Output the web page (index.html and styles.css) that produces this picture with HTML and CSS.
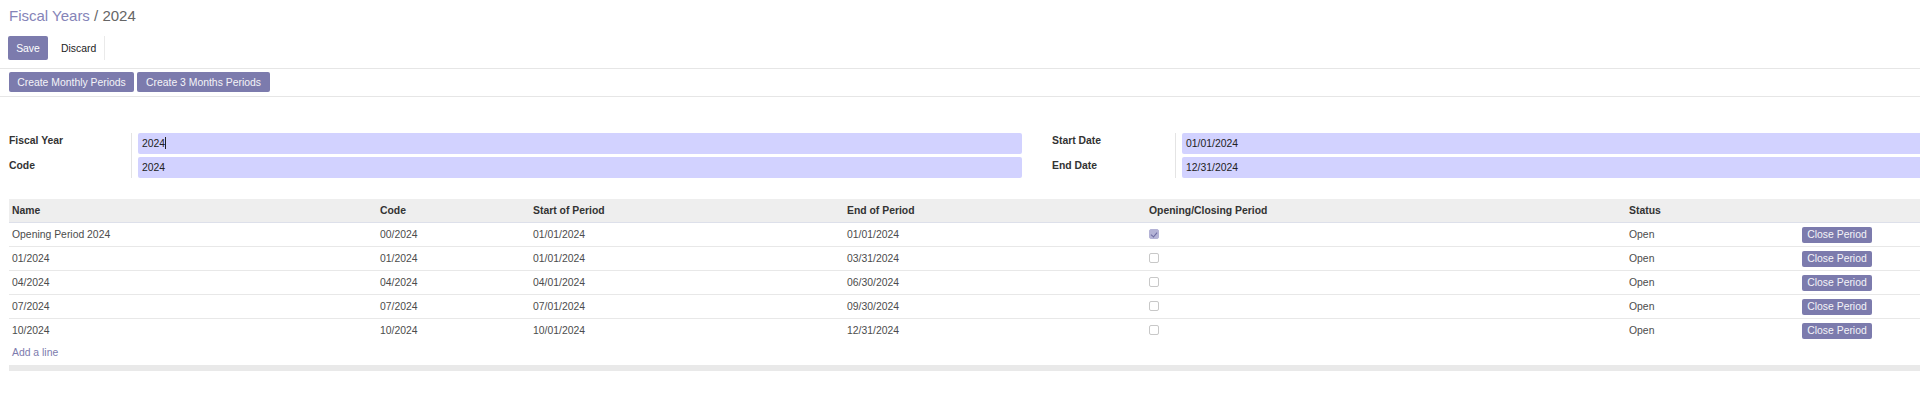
FILE: index.html
```html
<!DOCTYPE html>
<html lang="en">

<head>
  <meta charset="UTF-8" />
  <meta name="viewport" content="width=device-width, initial-scale=1.0" />
  <title>Fiscal Years / 2024</title>
  <link rel="stylesheet" href="styles.css">
</head>

<body>

  <div class="breadcrumb"><span class="crumb">Fiscal Years</span> / 2024</div>

  <div class="toolbar">
    <button class="btn-primary">Save</button>
    <button class="btn-discard">Discard</button>
  </div>

  <div class="header-buttons">
    <button class="btn-small">Create Monthly Periods</button>
    <button class="btn-small">Create 3 Months Periods</button>
  </div>

  <div class="sheet">
    <!-- main fields -->
    <div class="groups">
      <div class="group group-left">
        <div class="labels">
          <label>Fiscal Year</label>
          <label>Code</label>
        </div>
        <div class="fields">
          <div class="field">2024<span class="caret"></span></div>
          <div class="field">2024</div>
        </div>
      </div>
      <div class="group group-right">
        <div class="labels">
          <label>Start Date</label>
          <label>End Date</label>
        </div>
        <div class="fields">
          <div class="field">01/01/2024</div>
          <div class="field">12/31/2024</div>
        </div>
      </div>
    </div>

    <!-- periods -->
    <table class="periods">
      <colgroup>
        <col class="c-name">
        <col class="c-code">
        <col class="c-start">
        <col class="c-end">
        <col class="c-special">
        <col class="c-state">
        <col class="c-action">
      </colgroup>
      <thead>
        <tr>
          <th>Name</th>
          <th>Code</th>
          <th>Start of Period</th>
          <th>End of Period</th>
          <th>Opening/Closing Period</th>
          <th>Status</th>
          <th></th>
        </tr>
      </thead>
      <tbody>
        <tr>
          <td>Opening Period 2024</td>
          <td>00/2024</td>
          <td>01/01/2024</td>
          <td>01/01/2024</td>
          <td><span class="check checked"></span></td>
          <td>Open</td>
          <td><button class="btn-row">Close Period</button></td>
        </tr>
        <tr>
          <td>01/2024</td>
          <td>01/2024</td>
          <td>01/01/2024</td>
          <td>03/31/2024</td>
          <td><span class="check"></span></td>
          <td>Open</td>
          <td><button class="btn-row">Close Period</button></td>
        </tr>
        <tr>
          <td>04/2024</td>
          <td>04/2024</td>
          <td>04/01/2024</td>
          <td>06/30/2024</td>
          <td><span class="check"></span></td>
          <td>Open</td>
          <td><button class="btn-row">Close Period</button></td>
        </tr>
        <tr>
          <td>07/2024</td>
          <td>07/2024</td>
          <td>07/01/2024</td>
          <td>09/30/2024</td>
          <td><span class="check"></span></td>
          <td>Open</td>
          <td><button class="btn-row">Close Period</button></td>
        </tr>
        <tr>
          <td>10/2024</td>
          <td>10/2024</td>
          <td>10/01/2024</td>
          <td>12/31/2024</td>
          <td><span class="check"></span></td>
          <td>Open</td>
          <td><button class="btn-row">Close Period</button></td>
        </tr>
        <tr class="add-row">
          <td colspan="7"><a href="#">Add a line</a></td>
        </tr>
      </tbody>
    </table>

    <div class="bottom-bar"></div>
  </div>

</body>

</html>
```

FILE: styles.css
```css
body {
  font-family: 'Liberation Sans', Arial, sans-serif;
  font-size: 10.4px;
  color: #4c4c4c;
  background: #fff;
  margin: 0;
  padding: 0;
  overflow: hidden;
}

button {
  font-family: inherit;
  font-size: 10.4px;
  border: none;
  cursor: pointer;
  margin: 0;
}

.breadcrumb {
  font-size: 15px;
  line-height: 20px;
  padding: 6px 0 0 9px;
  color: #666;
}

.crumb {
  color: #8584b8;
}

.toolbar {
  display: flex;
  align-items: center;
  padding: 10px 0 8px 8px;
  border-bottom: 1px solid #e6e6e6;
}

.btn-primary {
  background: #7c7bad;
  color: #fff;
  height: 24px;
  width: 40px;
  border-radius: 2px;
}

.btn-discard {
  background: #fff;
  color: #222;
  height: 24px;
  margin-left: 4px;
  padding: 0 8px 0 9px;
  border-right: 1px solid #eaeaea;
}

.header-buttons {
  display: flex;
  gap: 3px;
  padding: 3px 0 4px 9px;
  border-bottom: 1px solid #e6e6e6;
}

.btn-small {
  background: #7c7bad;
  color: #f4f4f8;
  height: 20px;
  padding: 0 7px;
  border-radius: 2px;
}

.btn-small:first-child {
  width: 125px;
}

.btn-small:last-child {
  width: 133px;
}

.sheet {
  padding: 36px 0 0 9px;
  width: 1940px;
}

.groups {
  display: flex;
}

.group {
  display: flex;
}

.labels {
  display: flex;
  flex-direction: column;
  gap: 11px;
  padding-top: 1px;
  border-right: 1px solid #e4e4e4;
  padding-bottom: 5px;
}

.labels label {
  font-weight: bold;
  color: #333;
  line-height: 14px;
}

.group-left .labels {
  width: 122px;
}

.group-right {
  margin-left: 30px;
}

.group-right .labels {
  width: 123px;
}

.fields {
  display: flex;
  flex-direction: column;
  gap: 3px;
  margin-left: 6px;
}

.group-left .fields {
  width: 884px;
}

.group-right .fields {
  width: 760px;
}

.field {
  background: #d2d2ff;
  height: 21px;
  line-height: 21px;
  padding-left: 4px;
  border-radius: 2px;
  color: #222;
}

.caret {
  display: inline-block;
  width: 1px;
  height: 12px;
  background: #222;
  vertical-align: -2px;
}

.periods {
  margin-top: 21px;
  width: 100%;
  border-collapse: collapse;
  table-layout: fixed;
}

.c-name { width: 368px; }
.c-code { width: 153px; }
.c-start { width: 314px; }
.c-end { width: 302px; }
.c-special { width: 480px; }
.c-state { width: 173px; }

.periods th {
  background: #eeeeee;
  color: #333;
  font-weight: bold;
  text-align: left;
  height: 23px;
  padding: 0 3px;
  border-bottom: 1px solid #dde0ea;
}

.periods td {
  height: 23px;
  padding: 0 3px;
  border-bottom: 1px solid #e8e8e8;
  white-space: nowrap;
}

.periods tbody tr:nth-last-child(2) td {
  border-bottom: none;
  height: 23px;
}

.periods .add-row td {
  height: 20px;
  border-bottom: none;
}

.add-row a {
  color: #7c7bad;
  text-decoration: none;
}

.check {
  display: inline-block;
  width: 8px;
  height: 8px;
  border: 1px solid #c8c8c8;
  border-radius: 2px;
  vertical-align: middle;
  position: relative;
  top: -1px;
}

.check.checked {
  background: #b4b3d6;
  border-color: #b4b3d6;
}

.check.checked::after {
  content: "";
  position: absolute;
  left: 2px;
  top: 1px;
  width: 3px;
  height: 5px;
  border: solid #6e6da3;
  border-width: 0 1px 1px 0;
  transform: rotate(40deg);
}

.btn-row {
  background: #7c7bad;
  color: #f4f4f8;
  height: 16px;
  width: 70px;
  padding: 0;
  border-radius: 2px;
}

.bottom-bar {
  height: 6px;
  background: #e9e9e9;
  margin-top: 3px;
}
```
